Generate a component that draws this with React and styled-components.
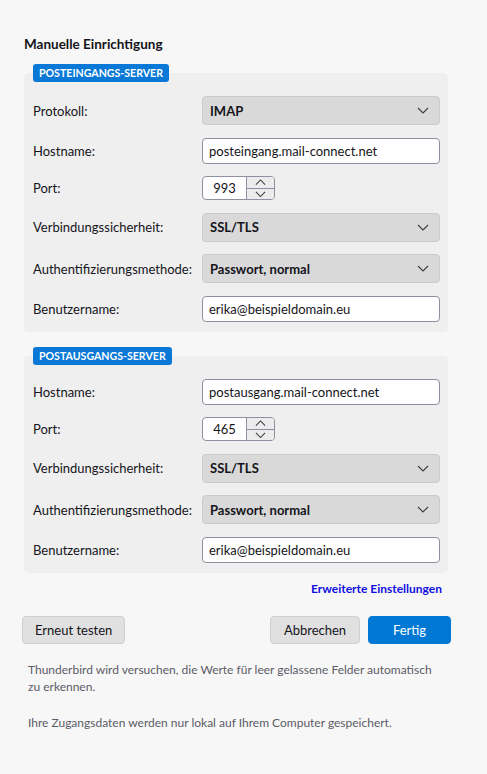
import React from "react";
import styled, { createGlobalStyle } from "styled-components";

const GlobalStyle = createGlobalStyle`
  html, body {
    margin: 0;
    padding: 0;
    background: #f7f7f7;
  }
  body {
    font-family: Lato, "Noto Sans", sans-serif;
    color: #15141a;
  }
`;

const Page = styled.div`
  width: 487px;
  min-height: 774px;
  box-sizing: border-box;
  padding: 35px 36px 0 22px;
`;

const Title = styled.h2`
  margin: 0 0 11px 2px;
  font-size: 13.5px;
  font-weight: 700;
  line-height: 18px;
`;

const Section = styled.section`
  margin: 0 0 15px 2px;
  width: 424px;
`;

const Badge = styled.div`
  position: relative;
  width: fit-content;
  margin: 0 0 -9px 9px;
  padding: 0 6px;
  height: 18px;
  line-height: 18px;
  background: #0a78d7;
  color: #fff;
  font-size: 10.6px;
  font-weight: 700;
  border-radius: 3px;
`;

const Box = styled.div`
  display: grid;
  grid-template-columns: 169px 1fr;
  row-gap: 12.5px;
  align-items: center;
  padding: 23px 8px 10px 9px;
  background: #efefef;
  border-radius: 5px;
`;

const Label = styled.label`
  font-size: 13px;
`;

const Select = styled.div`
  display: flex;
  align-items: center;
  justify-content: space-between;
  height: 29px;
  box-sizing: border-box;
  padding: 0 10px 0 7px;
  background: #d9d9d9;
  border: 1px solid #cbcbcb;
  border-radius: 4px;
  font-size: 13px;
  font-weight: 700;
`;

const TextField = styled.div`
  display: flex;
  align-items: center;
  height: 26px;
  box-sizing: border-box;
  padding: 0 6px;
  background: #fff;
  border: 1px solid #8f8f9d;
  border-radius: 4px;
  font-size: 13px;
`;

const Spin = styled.div`
  display: flex;
  width: 73px;
  height: 24px;
  box-sizing: border-box;
  background: #fff;
  border: 1px solid #8f8f9d;
  border-radius: 4px;
  overflow: hidden;
`;

const SpinValue = styled.div`
  flex: 1;
  display: flex;
  align-items: center;
  justify-content: center;
  font-size: 13px;
`;

const SpinButtons = styled.div`
  display: flex;
  flex-direction: column;
  width: 27px;
  border-left: 1px solid #8f8f9d;
`;

const SpinButton = styled.div`
  flex: 1;
  display: flex;
  align-items: center;
  justify-content: center;
  background: #ececec;
  & + & {
    border-top: 1px solid #8f8f9d;
  }
`;

const Chevron = ({ up, size = 12 }) => (
  <svg width={size} height={size / 2 + 1} viewBox="0 0 12 7" fill="none">
    <path
      d={up ? "M1 6 L6 1 L11 6" : "M1 1 L6 6 L11 1"}
      stroke="#3b3b3b"
      strokeWidth="1.1"
    />
  </svg>
);

const LinkRow = styled.div`
  display: flex;
  justify-content: flex-end;
  width: 420px;
  margin: -7px 0 0 0;
`;

const Link = styled.a`
  color: #1010e0;
  font-size: 12px;
  font-weight: 700;
  text-decoration: none;
`;

const Buttons = styled.div`
  display: flex;
  align-items: center;
  gap: 8px;
  width: 429px;
  margin-top: 20px;
`;

const Button = styled.button`
  height: 28px;
  padding: 0 ${(p) => p.$pad || 12}px;
  min-width: ${(p) => p.$min || 0}px;
  font-family: inherit;
  font-size: 13px;
  color: ${(p) => (p.$primary ? "#fff" : "#15141a")};
  background: ${(p) => (p.$primary ? "#0078d4" : "#e0e0e0")};
  border: 1px solid ${(p) => (p.$primary ? "#0078d4" : "#cfcfcf")};
  border-radius: 4px;
  ${(p) => p.$push && "margin-left: auto;"}
`;

const Note = styled.p`
  margin: ${(p) => p.$top || 0}px 0 0 6px;
  width: 408px;
  font-size: 12px;
  line-height: 17px;
  color: #5b5b66;
`;

const Row = ({ label, children }) => (
  <>
    <Label>{label}</Label>
    {children}
  </>
);

const Dropdown = ({ value }) => (
  <Select>
    {value}
    <Chevron />
  </Select>
);

const Port = ({ value }) => (
  <Spin>
    <SpinValue>{value}</SpinValue>
    <SpinButtons>
      <SpinButton>
        <Chevron up size={11} />
      </SpinButton>
      <SpinButton>
        <Chevron size={11} />
      </SpinButton>
    </SpinButtons>
  </Spin>
);

export default function App() {
  return (
    <Page>
      <GlobalStyle />
      <Title>Manuelle Einrichtigung</Title>

      <Section>
        <Badge>POSTEINGANGS-SERVER</Badge>
        <Box>
          <Row label="Protokoll:">
            <Dropdown value="IMAP" />
          </Row>
          <Row label="Hostname:">
            <TextField>posteingang.mail-connect.net</TextField>
          </Row>
          <Row label="Port:">
            <Port value="993" />
          </Row>
          <Row label="Verbindungssicherheit:">
            <Dropdown value="SSL/TLS" />
          </Row>
          <Row label="Authentifizierungsmethode:">
            <Dropdown value="Passwort, normal" />
          </Row>
          <Row label="Benutzername:">
            <TextField>erika@beispieldomain.eu</TextField>
          </Row>
        </Box>
      </Section>

      <Section>
        <Badge>POSTAUSGANGS-SERVER</Badge>
        <Box>
          <Row label="Hostname:">
            <TextField>postausgang.mail-connect.net</TextField>
          </Row>
          <Row label="Port:">
            <Port value="465" />
          </Row>
          <Row label="Verbindungssicherheit:">
            <Dropdown value="SSL/TLS" />
          </Row>
          <Row label="Authentifizierungsmethode:">
            <Dropdown value="Passwort, normal" />
          </Row>
          <Row label="Benutzername:">
            <TextField>erika@beispieldomain.eu</TextField>
          </Row>
        </Box>
      </Section>

      <LinkRow>
        <Link href="#">Erweiterte Einstellungen</Link>
      </LinkRow>

      <Buttons>
        <Button $min={103}>Erneut testen</Button>
        <Button $push $min={90}>Abbrechen</Button>
        <Button $primary $min={83}>Fertig</Button>
      </Buttons>

      <Note $top={17}>
        Thunderbird wird versuchen, die Werte für leer gelassene Felder
        automatisch zu erkennen.
      </Note>
      <Note $top={19}>
        Ihre Zugangsdaten werden nur lokal auf Ihrem Computer gespeichert.
      </Note>
    </Page>
  );
}
